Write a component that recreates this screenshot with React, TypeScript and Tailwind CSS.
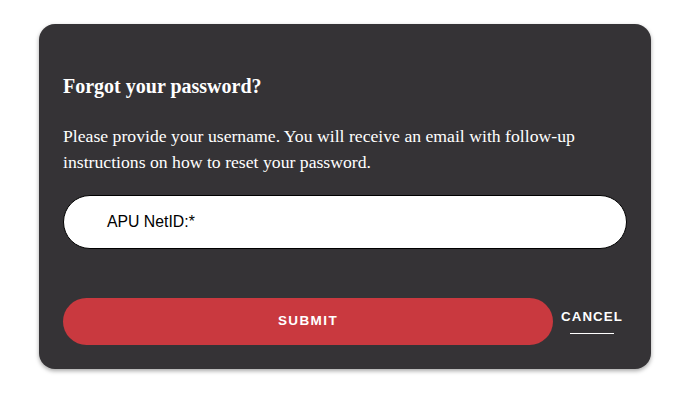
import React from "react";

export default function App() {
  return (
    <div className="min-h-[413px] w-[694px] bg-white pt-[24px] pl-[39px]">
      <div className="w-[612px] h-[345px] rounded-[16px] bg-[#353336] px-[24px] pt-[50px] shadow-[0_2px_4px_rgba(0,0,0,0.35)]">
        <h1 className="text-[20px] leading-[24px] font-bold text-white" style={{ fontFamily: '"Liberation Serif", serif' }}>
          Forgot your password?
        </h1>
        <p className="mt-[25px] text-[17.7px] leading-[26px] text-white" style={{ fontFamily: '"Liberation Serif", serif' }}>
          Please provide your username. You will receive an email with follow-up
          <br />
          instructions on how to reset your password.
        </p>
        <div className="mt-[20px] h-[54px] w-[564px] rounded-full border border-black bg-white flex items-center pl-[43px]">
          <span className="text-[15.8px] text-black" style={{ fontFamily: '"Liberation Sans", Arial, sans-serif' }}>
            APU NetID:*
          </span>
        </div>
        <div className="mt-[49px] flex items-center">
          <button className="h-[47px] w-[490px] rounded-full bg-[#c9393f] flex items-center justify-center">
            <span className="text-[13.5px] font-bold tracking-[1.4px] text-white" style={{ fontFamily: '"Liberation Sans", Arial, sans-serif' }}>
              SUBMIT
            </span>
          </button>
          <div className="ml-[8px] flex flex-col items-center">
            <span className="text-[13.3px] leading-[16px] font-bold tracking-[1.1px] text-white" style={{ fontFamily: '"Liberation Sans", Arial, sans-serif' }}>
              CANCEL
            </span>
            <div className="mt-[8px] h-px w-[44px] bg-white"></div>
          </div>
        </div>
      </div>
    </div>
  );
}
